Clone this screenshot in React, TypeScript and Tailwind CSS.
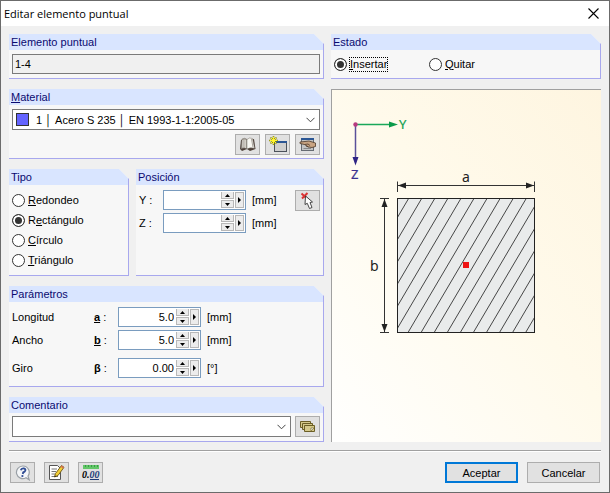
import React from 'react';

const iconButton =
  'flex h-[21px] w-[25px] shrink-0 items-center justify-center border border-[#adadad] bg-[#e1e1e1]';

type GroupProps = {
  title: React.ReactNode;
  className?: string;
  children: React.ReactNode;
};

function Group({ title, className = '', children }: GroupProps) {
  return (
    <section className="flex flex-col border-r border-b border-[#a8a8ee] bg-[#f7f7f7] [clip-path:polygon(0_0,calc(100%-10px)_0,100%_10px,100%_100%,0_100%)]">
      <h2 className="h-4 bg-[#d9e5ff] pl-[2px] leading-4 text-[#0a0a70]">{title}</h2>
      <div className={`flex-1 px-[3px] ${className}`}>{children}</div>
    </section>
  );
}

type RadioProps = {
  name: string;
  checked?: boolean;
  focused?: boolean;
  children: React.ReactNode;
};

function Radio({ name, checked = false, focused = false, children }: RadioProps) {
  return (
    <label className="flex h-5 items-center gap-[2px]">
      <input
        type="radio"
        name={name}
        defaultChecked={checked}
        className="m-0 h-[13px] w-[13px] shrink-0 appearance-none rounded-full border border-[#333] bg-white checked:bg-[#333] checked:shadow-[inset_0_0_0_2px_#fff]"
      />
      <span className={focused ? 'border border-dotted border-black leading-[13px]' : 'px-px leading-[13px]'}>
        {children}
      </span>
    </label>
  );
}

function NumberField({ label, value }: { label: string; value: string }) {
  return (
    <div className="flex h-5 w-[83px] border border-[#7a9cbf] bg-white p-px">
      <input
        type="text"
        aria-label={label}
        defaultValue={value}
        className="min-w-0 flex-1 bg-transparent pr-[2px] text-right outline-none"
      />
      <div className="flex w-[13px] flex-col gap-px">
        <button type="button" aria-label={`${label} +`} className="flex flex-1 items-center justify-center border border-t-0 border-[#b8b8b8] bg-[#ececec]">
          <svg width="5" height="3" viewBox="0 0 5 3"><path d="M0 3L2.5 0L5 3Z" /></svg>
        </button>
        <button type="button" aria-label={`${label} -`} className="flex flex-1 items-center justify-center border border-[#b8b8b8] bg-[#ececec]">
          <svg width="5" height="3" viewBox="0 0 5 3"><path d="M0 0L2.5 3L5 0Z" /></svg>
        </button>
      </div>
      <button type="button" aria-label={`${label} menu`} className="ml-px flex w-[9px] items-center justify-center border border-[#b8b8b8] bg-[#ececec]">
        <svg width="3" height="6" viewBox="0 0 3 6"><path d="M0 0L3 3L0 6Z" /></svg>
      </button>
    </div>
  );
}

function Chevron() {
  return (
    <svg className="pointer-events-none mr-1 shrink-0" width="9" height="6" viewBox="0 0 9 6" fill="none" stroke="#444">
      <path d="M.5 .8L4.5 4.8L8.5 .8" />
    </svg>
  );
}

function BookIcon() {
  return (
    <svg width="17" height="15" viewBox="0 0 17 15">
      <path d="M1 12L2 3L8 2V12L3 14Z" fill="#4d4038" />
      <path d="M8 12V3L15 2L16.500 12L11 14Z" fill="#4d4038" />
      <path d="M2 11.800L3 2Q6 .2 8 2.500V12Q5.500 10.300 2 11.800Z" fill="#a39d94" stroke="#77706a" strokeWidth=".5" />
      <path d="M3.800 3V10.500M5.200 2.600V10.500M6.600 2.800V11" stroke="#efede6" strokeWidth=".7" />
      <path d="M8 2.500Q10 0 13.500 1.500L15.500 11.300Q11 10 8 12Z" fill="#f8f7f2" stroke="#77706a" strokeWidth=".5" />
      <path d="M12.500 2L14 10.500" stroke="#aaa69f" />
    </svg>
  );
}

function NewWindowIcon() {
  return (
    <svg width="18" height="17" viewBox="0 0 18 17">
      <rect x="5.500" y="5.500" width="12" height="10" fill="#cfcfcf" stroke="#4b515a" />
      <rect x="5" y="5" width="13" height="2" fill="#2b5694" />
      <path d="M4.500 0V9M0 4.500H9M1.500 1.500L7.500 7.500M7.500 1.500L1.500 7.500" stroke="#8b8b10" strokeWidth="1.600" />
      <path d="M4.500 .8V8.200M.8 4.500H8.200M2 2L7 7M7 2L2 7" stroke="#fff52e" />
    </svg>
  );
}

function EditWindowIcon() {
  return (
    <svg width="17" height="15" viewBox="0 0 17 15">
      <rect x="2.500" y="1.500" width="12" height="12" fill="#c4c4c4" stroke="#666b72" />
      <rect x="2" y="1" width="13" height="2" fill="#2b5694" />
      <path d="M1 5L6 4.500L10 4L16.500 6V9.500L13 10.500L9.500 10L5.500 7.500L1 6.500Z" fill="#c9a482" stroke="#4c3828" strokeWidth=".8" />
      <path d="M5.500 7.500L9 7L11 8.500M7 9L9.500 10" stroke="#4c3828" fill="none" strokeWidth=".8" />
      <path d="M4.500 11.500H12" stroke="#888" />
    </svg>
  );
}

function PickIcon() {
  return (
    <svg width="16" height="18" viewBox="0 0 16 18">
      <path d="M1.500 1.500L7 6.500M7.500 1L2 6.500" stroke="#dc3434" strokeWidth="2" />
      <path d="M5.500 4L5 12.500L7.300 11.300L9.500 16.500L12 15.500L10 10.500L12.500 10Z" fill="#fff" stroke="#333" strokeWidth=".9" />
    </svg>
  );
}

function CardsIcon() {
  return (
    <svg width="16" height="13" viewBox="0 0 16 13" fill="#d5c98a" stroke="#6b5e24">
      <path d="M.5 1.500H10.500V7.500H.5Z" />
      <path d="M2.500 3.500H12.500V9.500H2.500Z" />
      <path d="M4.500 5.500H14.500V11.500H4.500Z" />
      <path d="M11 8H14L11 11Z" fill="#fff" strokeWidth=".6" />
    </svg>
  );
}

function HelpIcon() {
  return (
    <svg width="16" height="16" viewBox="0 0 16 16">
      <path d="M8 1A6.300 6.300 0 1 0 11 12.700L14.200 14.800L13 11A6.300 6.300 0 0 0 8 1Z" fill="#f4f6f8" stroke="#9aa0a6" strokeWidth="1.200" />
      <path d="M5.800 5.200Q6.300 3.300 8.500 3.400Q10.800 3.600 10.300 5.500Q9.900 6.800 8.200 7.500L7.800 9" stroke="#2f4c94" strokeWidth="1.900" fill="none" />
      <circle cx="7.400" cy="11" r="1.100" fill="#2f4c94" />
    </svg>
  );
}

function NoteIcon() {
  return (
    <svg width="17" height="17" viewBox="0 0 17 17">
      <path d="M1.500 1.500H9.500L12.500 4.500V15.500H1.500Z" fill="#fff" stroke="#555" />
      <path d="M3.500 5H9M3.500 7.500H8M3.500 10H7M3.500 12.500H10" stroke="#777" />
      <path d="M6.500 13L7.500 9.500L13.500 1.500L16 3.300L10 11.500Z" fill="#f3cf35" stroke="#6b5412" strokeWidth=".9" />
      <path d="M12.600 2.700L13.500 1.500L16 3.300L15.100 4.500Z" fill="#d66e55" />
      <path d="M6.500 13L6.900 11.500L8 12.300Z" fill="#111" />
    </svg>
  );
}

function DecimalsIcon() {
  return (
    <svg width="19" height="17" viewBox="0 0 19 17">
      <rect x="2" y="1" width="16" height="4" fill="#63c768" />
      <path d="M4.500 1V3M7.500 1V3M10.500 1V3M13.500 1V3M16.500 1V3" stroke="#3a9a48" />
      <text x="1" y="14" fontSize="10" fontWeight="700" fontStyle="italic" fontFamily="Liberation Serif, serif">
        0.<tspan fill="#1c3c78">00</tspan>
      </text>
      <path d="M9 15.500H18" stroke="#1c3c78" />
    </svg>
  );
}

function SectionDrawing() {
  const hatch = Array.from({ length: 16 }, (_, i) => 76.3 + i * 13.07);

  return (
    <svg className="block w-full" viewBox="0 0 269 352" fontFamily="Noto Sans, Open Sans, sans-serif">
      <defs>
        <clipPath id="section">
          <rect x="66" y="109" width="136" height="134" />
        </clipPath>
      </defs>

      {/* Axes */}
      <path d="M23 34.500H58" stroke="#1aa85a" strokeWidth="1.500" />
      <path d="M57 31.500L66 34.500L57 37.500Z" fill="#0b9b4a" />
      <path d="M23.500 35V68" stroke="#5a509a" strokeWidth="1.500" />
      <path d="M20.500 67L23.500 75.500L26.500 67Z" fill="#2f2585" />
      <circle cx="23.500" cy="34.500" r="2.200" fill="#b83a80" />
      <text x="67" y="39" fontSize="13" stroke="#12a050" strokeWidth=".2" fill="#12a050">Y</text>
      <text x="19" y="89" fontSize="13" stroke="#3a3090" strokeWidth=".2" fill="#3a3090">Z</text>

      {/* Cross-section */}
      <rect x="66" y="109" width="136" height="134" fill="#e9ebeb" />
      <g clipPath="url(#section)" stroke="#333" strokeWidth=".9">
        {hatch.map((x) => (
          <line key={x} x1={x} y1="109" x2={x - 79} y2="243" />
        ))}
      </g>
      <rect x="65.500" y="108.500" width="137" height="134" fill="none" stroke="#222" />
      <rect x="131" y="172" width="6" height="6" fill="#ee1515" />

      {/* Dimensions */}
      <path d="M65.500 91.500V102M202.500 91.500V102M66 95.500H202M48 108.500H57M48 242.500H57M52.500 109V242" stroke="#333" />
      <path d="M66 95.500L74 92.500V98.500ZM202 95.500L194 92.500V98.500ZM52.500 109L49.500 117H55.500ZM52.500 242L49.500 234H55.500Z" fill="#222" />
      <text x="130" y="92" fontSize="14" fill="#222">a</text>
      <text x="38" y="181" fontSize="14" fill="#222">b</text>
    </svg>
  );
}

export default function App() {
  return (
    <div className="flex min-h-screen flex-col border border-[#6b6b6b] bg-[#f0f0f0] font-['Liberation_Sans',Arial,sans-serif] text-[11px] leading-4 text-black">
      <header className="flex h-[25px] items-center justify-between bg-white pr-[10px] pl-[3px]">
        <h1 className="font-['Open_Sans','Noto_Sans',sans-serif] text-[11px]">Editar elemento puntual</h1>
        <button type="button" aria-label="Cerrar">
          <svg width="11" height="11" viewBox="0 0 11 11" stroke="#000" strokeWidth="1.100">
            <path d="M.5 .5L10.500 10.500M10.500 .5L.5 10.500" />
          </svg>
        </button>
      </header>

      <main className="grid flex-1 grid-cols-[7fr_6fr] gap-[7px] px-2 pt-2">
        {/* Left column */}
        <div className="flex flex-col gap-[10px]">
          <Group title="Elemento puntual" className="py-1">
            <input
              type="text"
              readOnly
              aria-label="Elemento puntual"
              defaultValue="1-4"
              className="block h-5 w-full border border-[#7a7a7a] bg-[#f0f0f0] px-[2px] outline-none"
            />
          </Group>

          <Group title={<><u>M</u>aterial</>} className="pt-1 pb-[3px]">
            <div className="flex h-[21px] items-center border border-[#7a7a7a] bg-white">
              <span className="ml-[3px] h-[13px] w-[13px] shrink-0 border border-[#333] bg-[#6464ff]" />
              <select
                aria-label="Material"
                className="ml-[7px] h-full min-w-0 flex-1 appearance-none bg-transparent font-['Liberation_Sans','DejaVu_Sans_Mono',sans-serif] outline-none"
              >
                <option>1&nbsp;│&nbsp;Acero S 235&nbsp;│&nbsp;EN 1993-1-1:2005-05</option>
              </select>
              <Chevron />
            </div>
            <div className="mt-1 flex justify-end gap-[5px]">
              <button type="button" aria-label="Biblioteca" className={iconButton}><BookIcon /></button>
              <button type="button" aria-label="Nuevo material" className={iconButton}><NewWindowIcon /></button>
              <button type="button" aria-label="Editar material" className={iconButton}><EditWindowIcon /></button>
            </div>
          </Group>

          <div className="grid grid-cols-[120fr_188fr] gap-[7px]">
            <Group title="Tipo" className="py-[5px]">
              <Radio name="tipo"><u>R</u>edondeo</Radio>
              <Radio name="tipo" checked>R<u>e</u>ctángulo</Radio>
              <Radio name="tipo"><u>C</u>írculo</Radio>
              <Radio name="tipo"><u>T</u>riángulo</Radio>
            </Group>

            <Group title="Posición" className="flex items-start justify-between pt-[5px]">
              <div className="flex flex-col gap-[3px]">
                {['Y', 'Z'].map((axis) => (
                  <div key={axis} className="flex items-center">
                    <span className="w-6">{axis} :</span>
                    <NumberField label={axis} value="" />
                    <span className="ml-[6px]">[mm]</span>
                  </div>
                ))}
              </div>
              <button type="button" aria-label="Seleccionar punto" className={iconButton}><PickIcon /></button>
            </Group>
          </div>

          <Group title="Parámetros" className="pt-[5px] pb-2">
            <div className="flex items-center">
              <span className="w-[82px]">Longitud</span>
              <span className="w-6"><u className="font-bold">a</u> :</span>
              <NumberField label="Longitud" value="5.0" />
              <span className="ml-[6px]">[mm]</span>
            </div>
            <div className="mt-[3px] flex items-center">
              <span className="w-[82px]">Ancho</span>
              <span className="w-6"><u className="font-bold">b</u> :</span>
              <NumberField label="Ancho" value="5.0" />
              <span className="ml-[6px]">[mm]</span>
            </div>
            <div className="mt-2 flex items-center">
              <span className="w-[82px]">Giro</span>
              <span className="w-6"><b>β</b> :</span>
              <NumberField label="Giro" value="0.00" />
              <span className="ml-[6px]">[°]</span>
            </div>
          </Group>

          <Group title="Comentario" className="flex gap-1 pt-[3px] pb-1">
            <div className="flex h-[21px] flex-1 items-center border border-[#7a7a7a] bg-white">
              <select aria-label="Comentario" className="h-full min-w-0 flex-1 appearance-none bg-transparent px-[3px] outline-none">
                <option></option>
              </select>
              <Chevron />
            </div>
            <button type="button" aria-label="Comentarios guardados" className={iconButton}><CardsIcon /></button>
          </Group>
        </div>

        {/* Right column */}
        <div className="flex flex-col gap-[10px]">
          <Group title="Estado" className="grid grid-cols-[95px_1fr] pt-1 pb-1">
            <Radio name="estado" checked focused><u>I</u>nsertar</Radio>
            <Radio name="estado"><u>Q</u>uitar</Radio>
          </Group>
          <div className="flex-1 border-t border-l border-[#a0a0a0] bg-[linear-gradient(to_bottom_left,#fef5e0,#fffaeb_45%,#fffffe)]">
            <SectionDrawing />
          </div>
        </div>
      </main>

      <hr className="mx-2 mt-2 border-t border-b border-t-[#a0a0a0] border-b-white" />

      <footer className="flex items-center gap-[9px] px-[9px] pt-[10px] pb-[9px]">
        <button type="button" aria-label="Ayuda" className={iconButton}><HelpIcon /></button>
        <button type="button" aria-label="Notas" className={iconButton}><NoteIcon /></button>
        <button type="button" aria-label="Unidades y decimales" className={iconButton}><DecimalsIcon /></button>
        <button type="button" className="ml-auto flex h-[21px] w-[73px] items-center justify-center border-2 border-[#0078d7] bg-[#e1e1e1]">Aceptar</button>
        <button type="button" className="flex h-[21px] w-[73px] items-center justify-center border border-[#adadad] bg-[#e1e1e1]">Cancelar</button>
      </footer>
    </div>
  );
}
